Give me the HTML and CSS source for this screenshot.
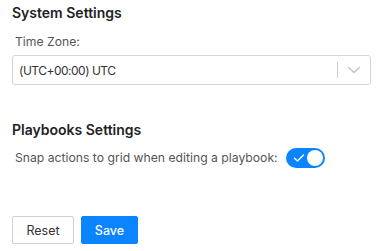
FILE: index.html
```html
<!DOCTYPE html>
<html>
<head>
<meta charset="utf-8">
<link rel="stylesheet" href="styles.css">
</head>
<body>
<div class="page">
  <section class="group">
    <h2 class="title">System Settings</h2>
    <div class="field-label">Time Zone:</div>
    <div class="select">
      <span class="select-value">(UTC+00:00) UTC</span>
      <span class="indicators">
        <span class="sep"></span>
        <svg class="chevron" width="20" height="20" viewBox="0 0 20 20"><path d="M4.5 7.5 L10 12.5 L15.5 7.5" fill="none" stroke="#c4c4c4" stroke-width="1.6" stroke-linecap="round" stroke-linejoin="round"/></svg>
      </span>
    </div>
  </section>
  <section class="group group-2">
    <h2 class="title">Playbooks Settings</h2>
    <div class="row">
      <span class="field-label inline">Snap actions to grid when editing a playbook:</span>
      <span class="toggle">
        <svg class="check" width="12" height="10" viewBox="0 0 12 10"><path d="M1.5 5.2 L4.5 8 L10.5 2" fill="none" stroke="#fff" stroke-width="1.4" stroke-linecap="round" stroke-linejoin="round"/></svg>
        <span class="knob"></span>
      </span>
    </div>
  </section>
  <div class="actions">
    <button class="btn btn-default">Reset</button>
    <button class="btn btn-primary">Save</button>
  </div>
</div>
</body>
</html>
```
FILE: styles.css
```css
* { box-sizing: border-box; }
html, body { margin: 0; padding: 0; background: #fff; }
body {
  font-family: Inter, "Noto Sans", sans-serif;
  color: #222;
  width: 380px;
  height: 251px;
  overflow: hidden;
}
.page {
  padding: 4px 9px 0 12px;
  display: flex;
  flex-direction: column;
}
.title {
  margin: 0;
  font-size: 14px;
  font-weight: 600;
  line-height: 18px;
  color: #222;
}
.field-label {
  font-size: 12.2px;
  line-height: 16px;
  color: #555;
  padding-left: 3px;
  margin-top: 12px;
}
.select {
  margin-top: 5px;
  height: 30px;
  border: 1px solid #d4d4d4;
  border-radius: 3px;
  display: flex;
  align-items: center;
  justify-content: space-between;
  padding: 0 6px 0 6px;
}
.select-value {
  font-size: 12px;
  letter-spacing: -0.5px;
  color: #333;
}
.indicators {
  display: flex;
  align-items: center;
  gap: 6px;
}
.sep {
  width: 1px;
  height: 16px;
  background: #ccc;
}
.chevron { display: block; }
.group-2 { margin-top: 36px; }
.row {
  display: flex;
  align-items: center;
  gap: 8px;
  margin-top: 9px;
}
.field-label.inline { margin-top: 0; }
.toggle {
  width: 39px;
  height: 20px;
  border-radius: 10px;
  background: #0a84ff;
  display: flex;
  align-items: center;
  justify-content: space-between;
  padding: 0 2px 0 7px;
}
.check { display: block; }
.knob {
  width: 16px;
  height: 16px;
  border-radius: 50%;
  background: #fff;
}
.actions {
  display: flex;
  gap: 7px;
  margin-top: 48px;
}
.btn {
  font-family: Inter, "Noto Sans", sans-serif;
  font-size: 12.5px;
  height: 28px;
  border-radius: 2px;
  padding: 0;
  cursor: pointer;
}
.btn-default {
  width: 62px;
  background: #fff;
  border: 1px solid #d0d0d0;
  color: #333;
}
.btn-primary {
  width: 57px;
  background: #0a84ff;
  border: 1px solid #0a84ff;
  color: #fff;
  font-weight: 500;
}
```
